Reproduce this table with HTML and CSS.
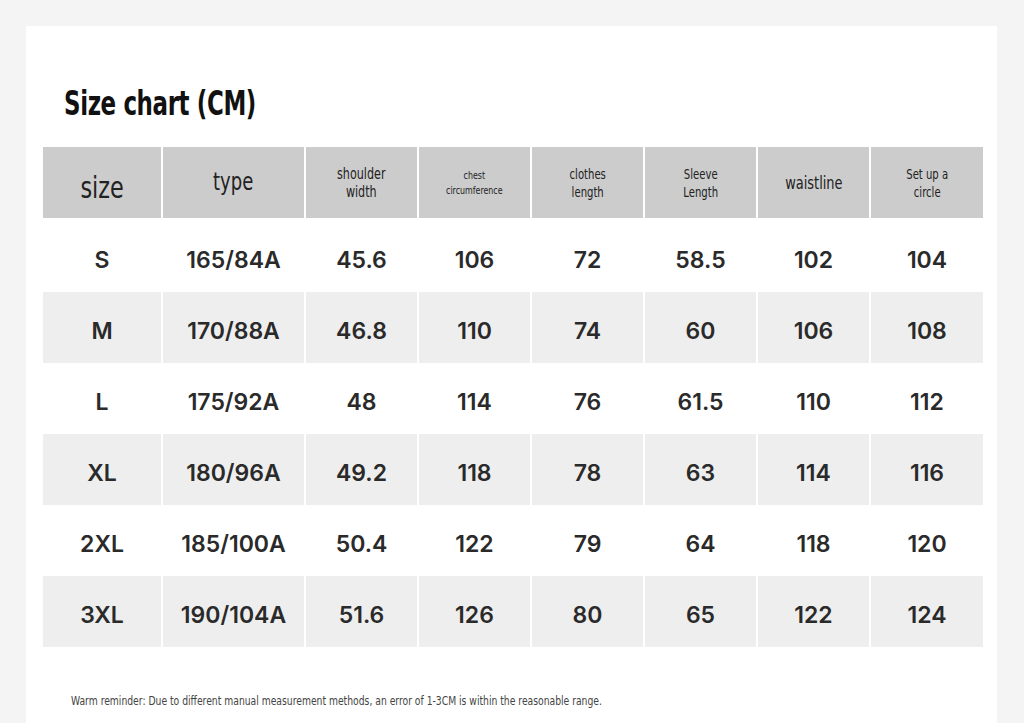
FILE: index.html
```html
<!DOCTYPE html>
<html>
<head>
    <meta charset="utf-8">
    <link rel="stylesheet" href="styles.css">
</head>
<body>
    <div class="card">
        <h1 class="title"><span class="narrow">Size chart (CM)</span></h1>
        <div class="chart">
            <!-- header -->
            <div class="hd"><span class="narrow h-size">size</span></div>
            <div class="hd"><span class="narrow h-type">type</span></div>
            <div class="hd"><span class="narrow h-md">shoulder<br>width</span></div>
            <div class="hd"><span class="narrow h-xs">chest<br>circumference</span></div>
            <div class="hd"><span class="narrow h-sm">clothes<br>length</span></div>
            <div class="hd"><span class="narrow h-sm">Sleeve<br>Length</span></div>
            <div class="hd"><span class="narrow h-lg">waistline</span></div>
            <div class="hd"><span class="narrow h-sm">Set up a<br>circle</span></div>
        </div>
        <div class="chart rows">
            <div class="c">S</div><div class="c">165/84A</div><div class="c">45.6</div><div class="c">106</div><div class="c">72</div><div class="c">58.5</div><div class="c">102</div><div class="c">104</div>
            <div class="c g">M</div><div class="c g">170/88A</div><div class="c g">46.8</div><div class="c g">110</div><div class="c g">74</div><div class="c g">60</div><div class="c g">106</div><div class="c g">108</div>
            <div class="c">L</div><div class="c">175/92A</div><div class="c">48</div><div class="c">114</div><div class="c">76</div><div class="c">61.5</div><div class="c">110</div><div class="c">112</div>
            <div class="c g">XL</div><div class="c g">180/96A</div><div class="c g">49.2</div><div class="c g">118</div><div class="c g">78</div><div class="c g">63</div><div class="c g">114</div><div class="c g">116</div>
            <div class="c">2XL</div><div class="c">185/100A</div><div class="c">50.4</div><div class="c">122</div><div class="c">79</div><div class="c">64</div><div class="c">118</div><div class="c">120</div>
            <div class="c g">3XL</div><div class="c g">190/104A</div><div class="c g">51.6</div><div class="c g">126</div><div class="c g">80</div><div class="c g">65</div><div class="c g">122</div><div class="c g">124</div>
        </div>
        <p class="note"><span class="narrow">Warm reminder: Due to different manual measurement methods, an error of 1-3CM is within the reasonable range.</span></p>
    </div>
</body>
</html>
```

FILE: styles.css
```css
body {
    margin: 0;
    background-color: #f4f4f4;
    height: 723px;
    overflow: hidden;
}
.card {
    margin: 26px 0 0 26px;
    width: 971px;
    height: 697px;
    background-color: #fff;
    padding: 0 0 0 17px;
    box-sizing: border-box;
}
.narrow {
    display: inline-block;
    transform: scaleX(0.8);
}
.title {
    margin: 0;
    padding: 57px 0 0 21px;
    height: 121px;
    box-sizing: border-box;
    font-family: "DejaVu Sans Condensed", "DejaVu Sans", sans-serif;
    font-stretch: condensed;
    font-weight: 700;
    font-size: 34px;
    line-height: 40px;
    color: #111;
    letter-spacing: -0.5px;
}
.title .narrow {
    transform: scaleX(0.75);
    transform-origin: left center;
}
.chart {
    display: grid;
    grid-template-columns: 118px 141px repeat(5, 111px) 112px;
    column-gap: 2px;
}
.rows {
    margin-top: 3px;
}
.hd {
    height: 71px;
    background-color: #cccccc;
    display: flex;
    align-items: center;
    justify-content: center;
    text-align: center;
    font-family: "DejaVu Sans Condensed", "DejaVu Sans", sans-serif;
    font-stretch: condensed;
    color: #222;
}
.h-size { font-size: 31px; padding-top: 8px; white-space: nowrap; }
.h-type { font-size: 25px; padding-bottom: 2px; }
.h-md { font-size: 15.5px; line-height: 18px; }
.h-sm { font-size: 14px; line-height: 18px; }
.h-xs { font-size: 11px; line-height: 15px; }
.h-lg { font-size: 18px; }
.c {
    height: 71px;
    display: flex;
    align-items: center;
    justify-content: center;
    font-family: Inter, "Open Sans", sans-serif;
    font-weight: 600;
    font-size: 23px;
    color: #2a2a2a;
    padding-top: 6px;
    box-sizing: border-box;
}
.g {
    background-color: #eeeeee;
}
.note {
    margin: 46px 0 0 28px;
    font-family: "DejaVu Sans Condensed", "DejaVu Sans", sans-serif;
    font-stretch: condensed;
    font-size: 12.5px;
    color: #444;
    white-space: nowrap;
}
.note .narrow {
    transform: scaleX(0.82);
    transform-origin: left center;
}
```
